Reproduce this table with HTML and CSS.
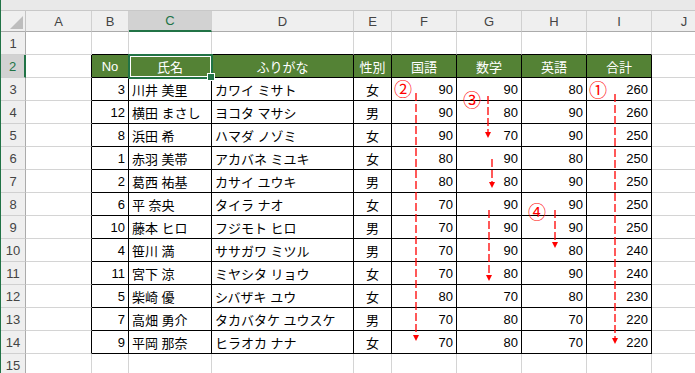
FILE: index.html
```html
<!DOCTYPE html>
<html lang="ja">
<head>
<meta charset="utf-8">
<title>成績表</title>
<link rel="stylesheet" href="styles.css">
</head>
<body>
<div class="app">
  <div class="frame">
    <div class="topbar"></div>
    <div class="sheet">
      <div class="corner"><svg width="13" height="13" viewBox="0 0 13 13"><polygon points="13,0 13,13 0,13" fill="#bdbdbd"/></svg></div>
      <div class="ch">A</div><div class="ch">B</div><div class="ch sel">C</div><div class="ch">D</div><div class="ch">E</div><div class="ch">F</div><div class="ch">G</div><div class="ch">H</div><div class="ch">I</div><div class="ch">J</div>

      <div class="rh">1</div><div></div><div class="tt"></div><div class="tt"></div><div class="tt"></div><div class="tt"></div><div class="tt"></div><div class="tt"></div><div class="tt"></div><div class="tt"></div><div></div>

      <div class="rh sel">2</div><div class="tl"></div><div class="h t">No</div><div class="h t active">氏名</div><div class="h t">ふりがな</div><div class="h t">性別</div><div class="h t">国語</div><div class="h t">数学</div><div class="h t">英語</div><div class="h t">合計</div><div></div>

      <div class="rh">3</div><div class="tl"></div><div class="t num">3</div><div class="t">川井 美里</div><div class="t">カワイ ミサト</div><div class="t mid">女</div><div class="t num">90</div><div class="t num">90</div><div class="t num">80</div><div class="t num">260</div><div></div>

      <div class="rh">4</div><div class="tl"></div><div class="t num">12</div><div class="t">横田 まさし</div><div class="t">ヨコタ マサシ</div><div class="t mid">男</div><div class="t num">90</div><div class="t num">80</div><div class="t num">90</div><div class="t num">260</div><div></div>

      <div class="rh">5</div><div class="tl"></div><div class="t num">8</div><div class="t">浜田 希</div><div class="t">ハマダ ノゾミ</div><div class="t mid">女</div><div class="t num">90</div><div class="t num">70</div><div class="t num">90</div><div class="t num">250</div><div></div>

      <div class="rh">6</div><div class="tl"></div><div class="t num">1</div><div class="t">赤羽 美帯</div><div class="t">アカバネ ミユキ</div><div class="t mid">女</div><div class="t num">80</div><div class="t num">90</div><div class="t num">80</div><div class="t num">250</div><div></div>

      <div class="rh">7</div><div class="tl"></div><div class="t num">2</div><div class="t">葛西 祐基</div><div class="t">カサイ ユウキ</div><div class="t mid">男</div><div class="t num">80</div><div class="t num">80</div><div class="t num">90</div><div class="t num">250</div><div></div>

      <div class="rh">8</div><div class="tl"></div><div class="t num">6</div><div class="t">平 奈央</div><div class="t">タイラ ナオ</div><div class="t mid">女</div><div class="t num">70</div><div class="t num">90</div><div class="t num">90</div><div class="t num">250</div><div></div>

      <div class="rh">9</div><div class="tl"></div><div class="t num">10</div><div class="t">藤本 ヒロ</div><div class="t">フジモト ヒロ</div><div class="t mid">男</div><div class="t num">70</div><div class="t num">90</div><div class="t num">90</div><div class="t num">250</div><div></div>

      <div class="rh">10</div><div class="tl"></div><div class="t num">4</div><div class="t">笹川 満</div><div class="t">ササガワ ミツル</div><div class="t mid">男</div><div class="t num">70</div><div class="t num">90</div><div class="t num">80</div><div class="t num">240</div><div></div>

      <div class="rh">11</div><div class="tl"></div><div class="t num">11</div><div class="t">宮下 涼</div><div class="t">ミヤシタ リョウ</div><div class="t mid">女</div><div class="t num">70</div><div class="t num">80</div><div class="t num">90</div><div class="t num">240</div><div></div>

      <div class="rh">12</div><div class="tl"></div><div class="t num">5</div><div class="t">柴崎 優</div><div class="t">シバザキ ユウ</div><div class="t mid">女</div><div class="t num">80</div><div class="t num">70</div><div class="t num">80</div><div class="t num">230</div><div></div>

      <div class="rh">13</div><div class="tl"></div><div class="t num">7</div><div class="t">高畑 勇介</div><div class="t">タカバタケ ユウスケ</div><div class="t mid">男</div><div class="t num">70</div><div class="t num">80</div><div class="t num">70</div><div class="t num">220</div><div></div>

      <div class="rh">14</div><div class="tl"></div><div class="t num">9</div><div class="t">平岡 那奈</div><div class="t">ヒラオカ ナナ</div><div class="t mid">女</div><div class="t num">70</div><div class="t num">80</div><div class="t num">70</div><div class="t num">220</div><div></div>

      <div class="rh">15</div><div></div><div></div><div></div><div></div><div></div><div></div><div></div><div></div><div></div><div></div>
    </div>
  </div>

  <svg class="notes" width="695" height="373" viewBox="0 0 695 373">
    <g class="dash">
      <line x1="615" y1="94" x2="615" y2="339"/>
      <line x1="416" y1="93" x2="416" y2="336"/>
      <line x1="488" y1="96" x2="488" y2="133"/>
      <line x1="492" y1="159" x2="492" y2="183"/>
      <line x1="489" y1="210" x2="489" y2="276"/>
      <line x1="555" y1="210" x2="555" y2="243"/>
    </g>
    <g class="heads">
      <polygon points="612,338 618,338 615,344"/>
      <polygon points="413,335 419,335 416,341"/>
      <polygon points="485,132 491,132 488,138"/>
      <polygon points="489,182 495,182 492,188"/>
      <polygon points="486,275 492,275 489,281"/>
      <polygon points="552,242 558,242 555,248"/>
    </g>
    <text x="598" y="89">①</text>
    <text x="403" y="88">②</text>
    <text x="472" y="99">③</text>
    <text x="537" y="211">④</text>
  </svg>
</div>
</body>
</html>
```

FILE: styles.css
```css
* {
  box-sizing: border-box;
}

html,
body {
  margin: 0;
  padding: 0;
  background: #ffffff;
}

body {
  font-family: "Liberation Sans", "Noto Sans CJK JP", sans-serif;
  font-size: 13px;
  color: #000000;
  overflow: hidden;
}

.app {
  position: relative;
  width: 695px;
  height: 373px;
  overflow: hidden;
}

.frame {
  border-left: 1px solid #217346;
  height: 100%;
}

.topbar {
  height: 11px;
  background: #e9e9e9;
  border-bottom: 1px solid #c8c8c8;
}

.sheet {
  display: grid;
  grid-template-columns: 25px 66px 37px 83px 142px 38px 65px 65px 65px 65px 65px;
  grid-template-rows: 21px repeat(15, 23px);
}

.sheet > div {
  display: flex;
  align-items: center;
  padding: 0 3px;
  white-space: nowrap;
  overflow: hidden;
  border-right: 1px solid #d4d4d4;
  border-bottom: 1px solid #d4d4d4;
}

.sheet > .corner {
  background: #efefef;
  border-right-color: #c4c4c4;
  border-bottom-color: #ababab;
  justify-content: flex-end;
  align-items: flex-end;
  padding: 0 2px 2px 0;
}

.sheet > .ch {
  justify-content: center;
  background: #efefef;
  color: #444444;
  border-right-color: #d0d0d0;
  border-bottom-color: #ababab;
}

.sheet > .rh {
  justify-content: center;
  padding: 0;
  background: #efefef;
  color: #444444;
  border-right-color: #ababab;
  border-bottom-color: #d0d0d0;
}

.sheet > .ch.sel {
  background: #d2d2d2;
  color: #217346;
  border-bottom: 2px solid #217346;
}

.sheet > .rh.sel {
  background: #d2d2d2;
  color: #217346;
  border-right: 2px solid #217346;
}

.sheet > .tt {
  border-bottom-color: #000000;
}

.sheet > .tl {
  border-right-color: #000000;
}

.sheet > .t {
  border-right-color: #000000;
  border-bottom-color: #000000;
}

.sheet > .h {
  justify-content: center;
  background: #548235;
  color: #ffffff;
}

.sheet > .num {
  justify-content: flex-end;
}

.sheet > .mid {
  justify-content: center;
}

.sheet > .active {
  position: relative;
  overflow: visible;
}

.sheet > .active::after {
  content: "";
  position: absolute;
  left: -1px;
  top: -1px;
  right: -2px;
  bottom: -2px;
  border: 2px solid #217346;
  box-shadow: inset 0 0 0 1px #ffffff;
}

.sheet > .active::before {
  content: "";
  position: absolute;
  right: -4px;
  bottom: -4px;
  width: 6px;
  height: 6px;
  background: #217346;
  border: 1px solid #ffffff;
  z-index: 1;
}

.notes {
  position: absolute;
  left: 0;
  top: 0;
  pointer-events: none;
}

.notes .dash line {
  stroke: #ff0000;
  stroke-width: 1.3;
  stroke-dasharray: 8 3;
}

.notes .heads polygon {
  fill: #ff0000;
}

.notes text {
  font-family: "Noto Sans CJK JP", "DejaVu Sans", sans-serif;
  font-size: 18px;
  fill: #ff0000;
  text-anchor: middle;
  dominant-baseline: central;
}
```
